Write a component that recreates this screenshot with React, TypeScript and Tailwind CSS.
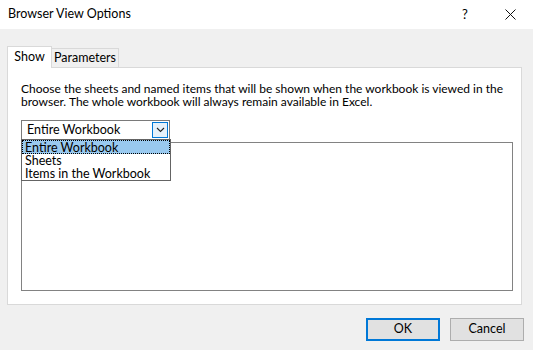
import React from "react";

const font = { fontFamily: 'Lato, "Noto Sans", Arial, sans-serif' };

function Chevron() {
  return (
    <svg width="9" height="6" viewBox="0 0 9 6" fill="none">
      <path d="M1 1l3.5 3.5L8 1" stroke="#222" strokeWidth="1.1" />
    </svg>
  );
}

function Tabs() {
  return (
    <div className="flex items-end h-[23px] pl-[7px]">
      <div className="relative z-10 h-[22px] w-[45px] bg-white border border-b-0 border-[#d9d9d9] flex items-center justify-center text-[12.5px] text-black -mb-px">
        Show
      </div>
      <div className="h-[19px] w-[67px] bg-[#f0f0f0] border border-l-0 border-b-0 border-[#d9d9d9] flex items-center justify-center text-[12.5px] text-black">
        Parameters
      </div>
    </div>
  );
}

function ComboBox() {
  return (
    <div className="relative w-[149px]">
      <div className="h-[20px] border border-[#7a7a7a] bg-white flex items-center pl-[5px] pr-[1px] text-[12.5px]">
        <span className="flex-1">Entire Workbook</span>
        <div className="h-[16px] w-[16px] border border-[#0078d7] bg-[#e5f1fb] flex items-center justify-center">
          <Chevron />
        </div>
      </div>
      <div className="absolute left-0 top-[19px] w-[150px] border border-[#646464] bg-white text-[12.5px] z-20">
        <div className="bg-[#99c9ef] border border-dotted border-black pl-[2px] h-[14px] leading-[13px]">Entire Workbook</div>
        <div className="pl-[3px] h-[13px] leading-[13px]">Sheets</div>
        <div className="pl-[3px] h-[13px] leading-[13px]">Items in the Workbook</div>
      </div>
    </div>
  );
}

export default function App() {
  return (
    <div className="w-[533px] h-[350px] bg-[#f0f0f0] flex flex-col text-black" style={font}>
      <div className="h-[29px] bg-white flex items-center pl-[8px] text-[12.5px]">
        <span className="flex-1">Browser View Options</span>
        <span className="w-[12px] text-[13px] mr-[31px]">?</span>
        <svg width="11" height="11" viewBox="0 0 11 11" className="mr-[17px]">
          <path d="M0.5 0.5l10 10M10.5 0.5l-10 10" stroke="#111" strokeWidth="1" />
        </svg>
      </div>
      <div className="pt-[15px]">
        <Tabs />
        <div className="ml-[7px] w-[515px] h-[238px] bg-white border border-[#d9d9d9] pt-[14px] pl-[13px]">
          <p className="text-[12px] leading-[13px] whitespace-nowrap">
            Choose the sheets and named items that will be shown when the workbook is viewed in the
            <br />
            browser. The whole workbook will always remain available in Excel.
          </p>
          <div className="mt-[12px]">
            <ComboBox />
          </div>
          <div className="mt-[2px] w-[492px] h-[149px] border border-[#828282] bg-white" />
        </div>
      </div>
      <div className="flex justify-end gap-[10px] pr-[9px] mt-[13px]">
        <button className="w-[74px] h-[23px] bg-[#e1e1e1] border-2 border-[#0078d7] text-[12.5px]">OK</button>
        <button className="w-[74px] h-[23px] bg-[#e1e1e1] border border-[#adadad] text-[12.5px]">Cancel</button>
      </div>
    </div>
  );
}
